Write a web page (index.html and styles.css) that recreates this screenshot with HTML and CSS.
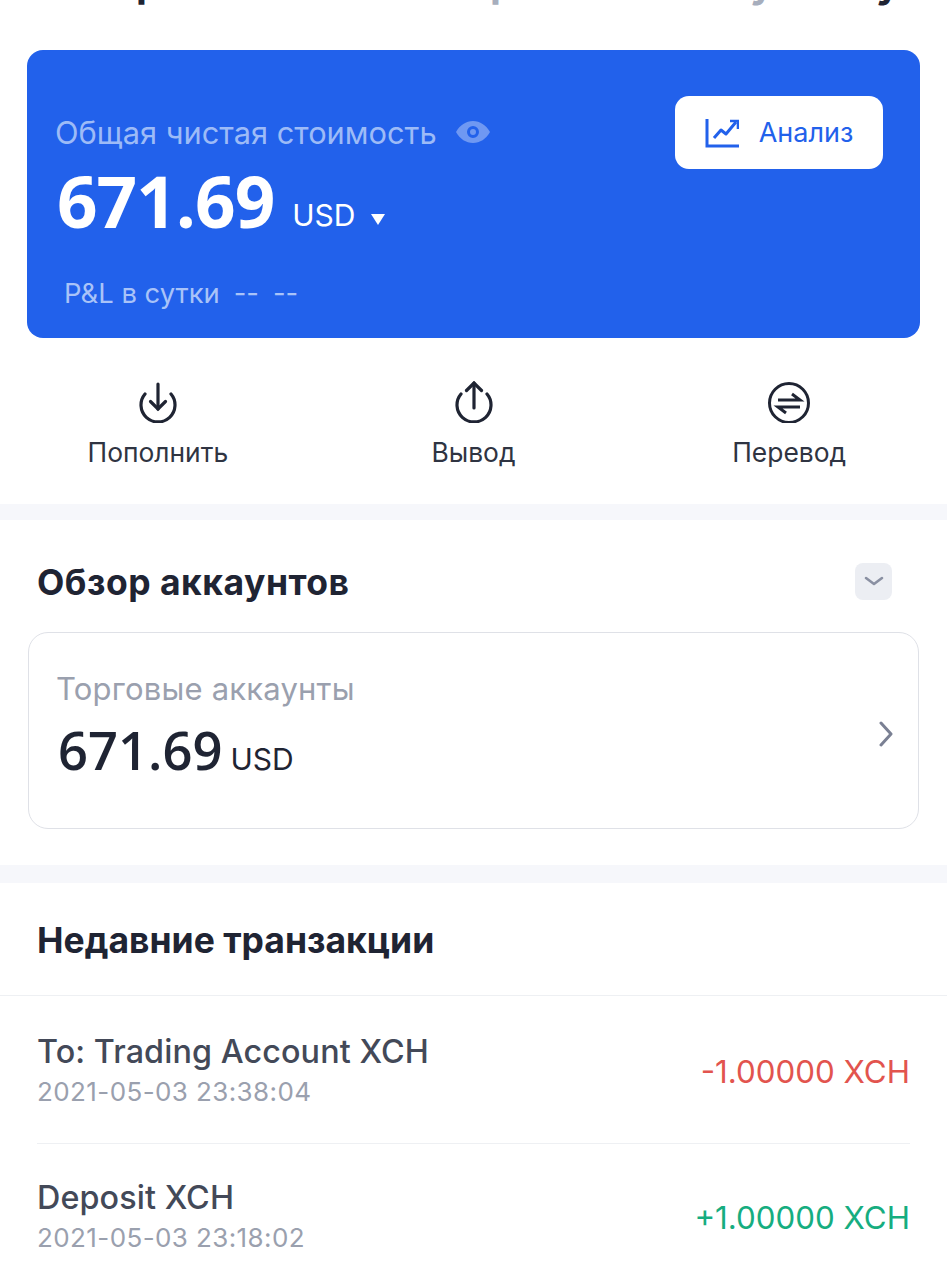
FILE: index.html
```html
<!DOCTYPE html>
<html lang="ru">
<head>
	<meta charset="UTF-8">
	<title>Кошелек</title>
	<link rel="stylesheet" href="styles.css">
</head>
<body>
	<div class="topCut">
		<span class="cutLeft">р</span>
		<span class="cutMid">р</span>
		<span class="cutRight">у</span>
		<span class="cutEnd">у</span>
	</div>
	<div class="balanceCard">
		<div class="balanceLeft">
			<div class="balanceTitle">Общая чистая стоимость
				<svg class="eye" width="34" height="24" viewBox="0 0 34 24"><path fill-rule="evenodd" d="M0 12C4 5 10 1 17 1s13 4 17 11c-4 7-10 11-17 11S4 19 0 12zm17 6a6 6 0 1 0 0-12 6 6 0 0 0 0 12zm0-3a3 3 0 1 1 0-6 3 3 0 0 1 0 6z"/></svg>
			</div>
			<div class="balanceRow"><span class="balanceNum">671.69</span><span class="balanceCur">USD</span><i class="caret"></i></div>
			<div class="pnl"><span>P&amp;L в сутки</span><span>--</span><span>--</span></div>
		</div>
		<div class="analyzeBtn">
			<svg width="34" height="30" viewBox="0 0 34 30" fill="none" stroke="#2261eb" stroke-width="3"><path d="M2 1v27h32"/><path d="M9 20l7-8 5 4 10-12" stroke-linejoin="round"/><path d="M25 3h8v8" stroke-width="2.6"/></svg>
			Анализ
		</div>
	</div>
	<div class="actions">
		<div class="action">
			<svg width="40" height="42" viewBox="0 0 40 42" fill="none" stroke="#1f2433" stroke-width="3.2" stroke-linecap="round"><path d="M7 13A17 17 0 1 0 33 13"/><path d="M20 3v25"/><path d="M12.500 20.500l7.500 7.500 7.500-7.500"/></svg>
			<span>Пополнить</span>
		</div>
		<div class="action">
			<svg width="40" height="42" viewBox="0 0 40 42" fill="none" stroke="#1f2433" stroke-width="3.2" stroke-linecap="round"><path d="M7 13A17 17 0 1 0 33 13"/><path d="M20 2v25"/><path d="M12.500 9.500l7.500-7.500 7.500 7.500"/></svg>
			<span>Вывод</span>
		</div>
		<div class="action">
			<svg width="44" height="42" viewBox="0 -1 44 42" fill="none" stroke="#1f2433" stroke-width="3"><circle cx="22" cy="21" r="19.500"/><path d="M11 18h22l-8-6"/><path d="M33 25H11l8 6"/></svg>
			<span>Перевод</span>
		</div>
	</div>
	<div class="divider"></div>
	<div class="section">
		<div class="sectionHead">
			<h2>Обзор аккаунтов</h2>
			<div class="toggle"><svg width="20" height="10" viewBox="0 0 20 10" fill="none" stroke="#8a90a2" stroke-width="2.6" stroke-linecap="round" stroke-linejoin="round"><path d="M2 2l8 6 8-6"/></svg></div>
		</div>
		<div class="accountCard">
			<div class="accountLeft">
				<div class="accountTitle">Торговые аккаунты</div>
				<div class="accountRow"><span class="accountNum">671.69</span><span class="accountCur">USD</span></div>
			</div>
			<svg class="chevron" width="14" height="26" viewBox="0 0 14 26" fill="none" stroke="#7a8093" stroke-width="3" stroke-linecap="round" stroke-linejoin="round"><path d="M2 2l10 11L2 24"/></svg>
		</div>
	</div>
	<div class="divider dividerLow"></div>
	<div class="recent">
		<h2>Недавние транзакции</h2>
		<ul class="txList">
			<li>
				<div><div class="txName">To: Trading Account XCH</div><div class="txDate">2021-05-03 23:38:04</div></div>
				<div class="txAmount out">-1.00000 XCH</div>
			</li>
			<li>
				<div><div class="txName">Deposit XCH</div><div class="txDate">2021-05-03 23:18:02</div></div>
				<div class="txAmount in">+1.00000 XCH</div>
			</li>
		</ul>
	</div>
</body>
</html>
```

FILE: styles.css
```css
html,body{margin:0;padding:0;}
body{width:947px;height:1280px;overflow:hidden;background:#fff;font-family:Inter,"Noto Sans",sans-serif;color:#1f2433;}
h2{margin:0;font-size:35.500px;line-height:40px;font-weight:700;color:#1f2433;}

.topCut{position:relative;height:50px;overflow:hidden;font-size:40px;font-weight:700;}
.topCut span{position:absolute;top:-42px;}
.cutLeft{left:136px;}
.cutMid{left:490px;color:#a7aebd;}
.cutRight{left:750px;color:#a7aebd;}
.cutEnd{left:876px;}

.balanceCard{display:flex;justify-content:space-between;align-items:flex-start;box-sizing:border-box;margin:0 27px;height:288px;padding:46px 37px 0 28px;border-radius:16px;background:#2261eb;}
.balanceLeft{margin-top:18px;}
.balanceTitle{display:flex;align-items:center;gap:19px;height:36px;font-size:30.800px;color:#9dbbf7;}
.eye{fill:#6f98f2;}
.balanceRow{height:84px;margin:9px 0 0 2px;line-height:84px;color:#fff;}
.balanceNum{font-family:"Open Sans",Inter,sans-serif;font-size:71px;font-weight:700;letter-spacing:-1px;}
.balanceCur{margin-left:18px;font-size:30px;vertical-align:2px;}
.caret{display:inline-block;width:0;height:0;margin-left:16px;border-left:7px solid transparent;border-right:7px solid transparent;border-top:11px solid #fff;vertical-align:3px;}
.pnl{display:flex;gap:14px;margin:33px 0 0 9px;font-size:27.400px;line-height:34px;color:#a9c3f8;}
.analyzeBtn{display:flex;align-items:center;justify-content:center;gap:20px;width:208px;height:73px;border-radius:14px;background:#fff;font-size:27px;color:#2261eb;}

.actions{display:flex;height:166px;box-sizing:border-box;padding-top:43px;}
.action{flex:1;display:flex;flex-direction:column;align-items:center;gap:12px;font-size:26.400px;line-height:34px;color:#2f3442;}
.divider{height:16px;background:#f6f7fb;}
.dividerLow{height:18px;}

.section{height:345px;box-sizing:border-box;padding:40px 28px 0;}
.sectionHead{display:flex;justify-content:space-between;align-items:center;padding:0 27px 0 9px;height:42px;}
.sectionHead h2{margin-top:4px;letter-spacing:.5px;}
.toggle{display:flex;align-items:center;justify-content:center;width:37px;height:37px;border-radius:8px;background:#eceef3;}
.accountCard{display:flex;justify-content:space-between;align-items:center;box-sizing:border-box;height:197px;margin-top:30px;padding:0 25px 0 27px;border:1px solid #dfe1e7;border-radius:20px;}
.accountLeft{padding-bottom:7px;}
.accountTitle{font-size:31px;line-height:36px;letter-spacing:.2px;color:#9aa0ae;}
.accountRow{display:flex;align-items:baseline;margin:9px 0 0 2px;}
.accountNum{font-family:"Open Sans",Inter,sans-serif;font-size:52.500px;line-height:68px;font-weight:600;}
.accountCur{margin-left:8px;font-size:30px;}
.chevron{margin-top:6px;}

.recent{padding-top:38px;}
.recent h2{padding-left:37px;}
.txList{list-style:none;margin:34px 0 0;padding:0;border-top:1px solid #eef0f3;}
.txList li{display:flex;justify-content:space-between;align-items:center;height:148px;padding-top:3px;margin:0 37px;box-sizing:border-box;border-bottom:1px solid #eef0f3;}
.txList li:last-child{border:none;height:146px;padding-top:0;}
.txName{font-size:32.300px;line-height:40px;font-weight:500;letter-spacing:.1px;color:#434958;}
.txDate{margin-top:2px;font-size:26px;line-height:36px;letter-spacing:.4px;color:#9aa0ae;}
.txAmount{margin-top:2px;font-size:31.300px;}
.out{color:#e2544e;}
.in{color:#16ad80;}
```
